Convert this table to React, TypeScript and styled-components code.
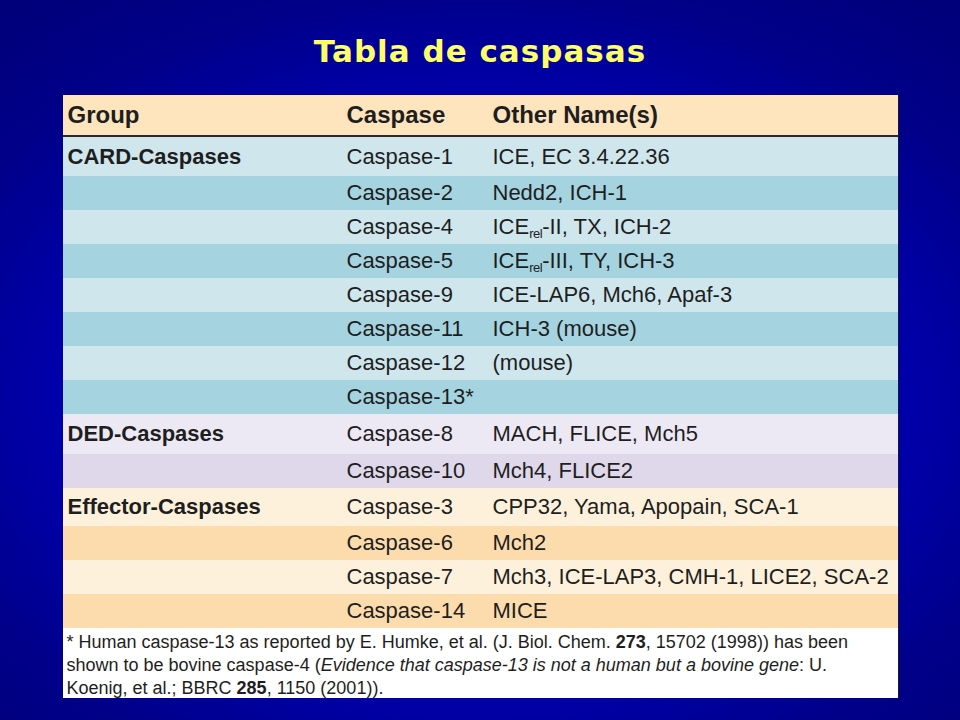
import styled, { createGlobalStyle } from "styled-components";

const GlobalStyle = createGlobalStyle`
    html, body {
        margin: 0;
        padding: 0;
    }
    body {
        width: 960px;
        height: 720px;
        overflow: hidden;
        background: radial-gradient(ellipse 75% 70% at 50% 55%, #0000e6 0%, #0000c0 45%, #00008a 80%, #00007a 100%);
    }
`;

const Page = styled.div`
    display: flex;
    flex-direction: column;
    align-items: center;
    height: 720px;
`;

const Title = styled.h1`
    margin: 30px 0 0;
    font-family: "Comic Sans MS", "DejaVu Sans", sans-serif;
    font-size: 31px;
    line-height: 42px;
    font-weight: bold;
    color: #ffff66;
    letter-spacing: 1px;
`;

const Card = styled.div`
    margin-top: 23px;
    width: 835px;
    box-shadow: 1px 0 0 #1a1a2a;
`;

const Table = styled.table`
    width: 100%;
    border-collapse: collapse;
    table-layout: fixed;
    font-family: "Liberation Sans", Arial, sans-serif;
    color: #1e1e1e;
`;

const HeadRow = styled.tr`
    background: #fee5bd;
    border-bottom: 2px solid #2a2a2a;
`;

const HeadCell = styled.th`
    height: 40px;
    padding: 0 0 0 5px;
    text-align: left;
    font-size: 24px;
    font-weight: bold;
    vertical-align: middle;
`;

const tones: Record<string, string> = {
    cardLight: "#cfe6ed",
    cardDark: "#a5d4e0",
    dedLight: "#ece9f4",
    dedDark: "#dfd8ea",
    effLight: "#fdf1dc",
    effDark: "#fcdcac",
};

const Row = styled.tr<{ $tone: string; $height: number }>`
    background: ${({ $tone }) => tones[$tone]};
    height: ${({ $height }) => $height}px;
`;

const Cell = styled.td<{ $bold?: boolean }>`
    padding: 0 0 0 5px;
    font-size: 22px;
    font-weight: ${({ $bold }) => ($bold ? "bold" : "normal")};
    white-space: nowrap;
    vertical-align: middle;
`;

const Sub = styled.sub`
    font-size: 13px;
    vertical-align: -4px;
    line-height: 0;
    letter-spacing: -0.5px;
`;

const Note = styled.div`
    background: #ffffff;
    padding: 3px 4px 0 4px;
    height: 70px;
    box-sizing: border-box;
    font-family: "Liberation Sans Narrow", "Liberation Sans", Arial, sans-serif;
    font-size: 18px;
    line-height: 23px;
    color: #1e1e1e;
`;

const NoteLine = styled.div`
    white-space: nowrap;
    height: 23px;
`;

type Entry = {
    group?: string;
    caspase: string;
    other: React.ReactNode;
    tone: string;
    height?: number;
};

const rows: Entry[] = [
    { group: "CARD-Caspases", caspase: "Caspase-1", other: "ICE, EC 3.4.22.36", tone: "cardLight", height: 40 },
    { caspase: "Caspase-2", other: "Nedd2, ICH-1", tone: "cardDark" },
    { caspase: "Caspase-4", other: <>ICE<Sub>rel</Sub>-II, TX, ICH-2</>, tone: "cardLight" },
    { caspase: "Caspase-5", other: <>ICE<Sub>rel</Sub>-III, TY, ICH-3</>, tone: "cardDark" },
    { caspase: "Caspase-9", other: "ICE-LAP6, Mch6, Apaf-3", tone: "cardLight" },
    { caspase: "Caspase-11", other: "ICH-3 (mouse)", tone: "cardDark" },
    { caspase: "Caspase-12", other: "(mouse)", tone: "cardLight" },
    { caspase: "Caspase-13*", other: "", tone: "cardDark" },
    { group: "DED-Caspases", caspase: "Caspase-8", other: "MACH, FLICE, Mch5", tone: "dedLight", height: 40 },
    { caspase: "Caspase-10", other: "Mch4, FLICE2", tone: "dedDark" },
    { group: "Effector-Caspases", caspase: "Caspase-3", other: "CPP32, Yama, Apopain, SCA-1", tone: "effLight", height: 38 },
    { caspase: "Caspase-6", other: "Mch2", tone: "effDark" },
    { caspase: "Caspase-7", other: "Mch3, ICE-LAP3, CMH-1, LICE2, SCA-2", tone: "effLight" },
    { caspase: "Caspase-14", other: "MICE", tone: "effDark" },
];

export default function App() {
    return (
        <Page>
            <GlobalStyle />
            <Title>Tabla de caspasas</Title>
            <Card>
                <Table>
                    <colgroup>
                        <col style={{ width: 279 }} />
                        <col style={{ width: 146 }} />
                        <col />
                    </colgroup>
                    <thead>
                        <HeadRow>
                            <HeadCell>Group</HeadCell>
                            <HeadCell>Caspase</HeadCell>
                            <HeadCell>Other Name(s)</HeadCell>
                        </HeadRow>
                    </thead>
                    <tbody>
                        {rows.map((r) => (
                            <Row key={r.caspase} $tone={r.tone} $height={r.height ?? 34}>
                                <Cell $bold>{r.group}</Cell>
                                <Cell>{r.caspase}</Cell>
                                <Cell>{r.other}</Cell>
                            </Row>
                        ))}
                    </tbody>
                </Table>
                <Note>
                    <NoteLine>
                        * Human caspase-13 as reported by E. Humke, et al. (J. Biol. Chem. <b>273</b>, 15702 (1998)) has been
                    </NoteLine>
                    <NoteLine>
                        shown to be bovine caspase-4 (<i>Evidence that caspase-13 is not a human but a bovine gene</i>: U.
                    </NoteLine>
                    <NoteLine>
                        Koenig, et al.; BBRC <b>285</b>, 1150 (2001)).
                    </NoteLine>
                </Note>
            </Card>
        </Page>
    );
}
